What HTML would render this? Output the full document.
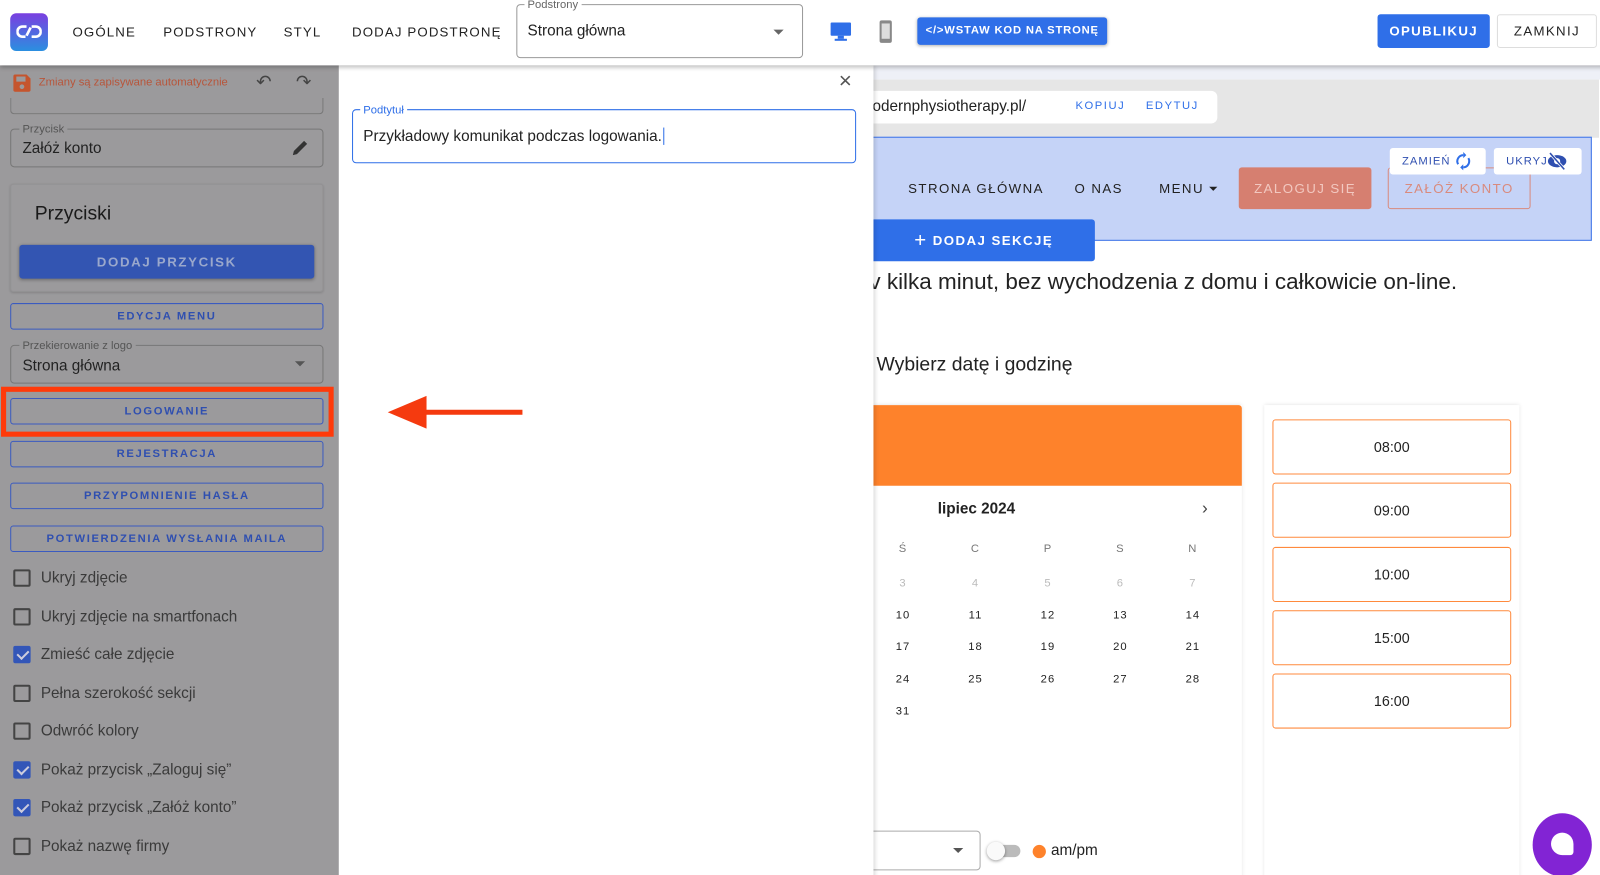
<!DOCTYPE html>
<html><head><meta charset="utf-8"><style>
*{box-sizing:border-box;margin:0;padding:0}
html,body{width:1600px;height:875px;overflow:hidden}
body{position:relative;font-family:"Liberation Sans",Arial,sans-serif;background:#fff;color:#222}
#w{position:absolute;left:0;top:0;width:1568px;height:858px;transform:scale(1.0204);transform-origin:0 0}
.a{position:absolute}
.nav{font-size:13px;letter-spacing:1.1px;color:#222;top:24px}
.lp{background:#9b9a9c;left:0;top:64px;width:332px;height:811px}
.ob{position:absolute;left:10px;width:307px;height:26px;border:1px solid #3b5bc0;border-radius:3px;color:#2f4fb0;font-size:11px;letter-spacing:1.6px;text-align:center;line-height:24px;font-weight:bold}
.cb{position:absolute;left:13px;width:17px;height:17px;border:2px solid #444;border-radius:2px}
.cb.on{background:#3356b8;border-color:#3356b8}
.cb.on:after{content:"";position:absolute;left:4px;top:0px;width:5px;height:9px;border:solid #ccd;border-width:0 2px 2px 0;transform:rotate(45deg)}
.cl{position:absolute;left:40px;font-size:15px;color:#3a3a3a}
.day{position:absolute;width:40px;text-align:center;font-size:11px;letter-spacing:1px;color:#222}
.slot{position:absolute;left:1247px;width:234px;height:54px;border:1.5px solid #ff8a3d;border-radius:3px;text-align:center;line-height:52px;font-size:14px;color:#222}
</style></head><body><div id="w">
<div class="a" style="left:0;top:0;width:1600px;height:64px;background:#fff;box-shadow:0 2px 4px rgba(0,0,0,.25);z-index:5">
 <div class="a" style="left:10px;top:13px;width:37px;height:37px;border-radius:6px;background:linear-gradient(180deg,#7a3fe0,#2b8fe0)"></div>
 <svg class="a" style="left:16px;top:24px" width="25" height="14" viewBox="0 0 25 14"><path d="M10 2H6a5 5 0 0 0 0 10h3M15 2h4a5 5 0 0 1 0 10h-4M14 3l-4 8" stroke="#fff" stroke-width="2.6" fill="none"/></svg>
 <div class="a nav" style="left:71px">OGÓLNE</div>
 <div class="a nav" style="left:160px">PODSTRONY</div>
 <div class="a nav" style="left:278px">STYL</div>
 <div class="a nav" style="left:345px">DODAJ PODSTRONĘ</div>
 <div class="a" style="left:506px;top:4px;width:281px;height:53px;border:1px solid #999;border-radius:4px"></div>
 <div class="a" style="left:514px;top:-1px;background:#fff;padding:0 3px;font-size:11px;color:#666">Podstrony</div>
 <div class="a" style="left:517px;top:22px;font-size:15px;color:#222">Strona główna</div>
 <div class="a" style="left:758px;top:29px;border:5px solid transparent;border-top-color:#666"></div>
 <svg class="a" style="left:813px;top:20px" width="22" height="22" viewBox="0 0 22 22"><rect x="1" y="2" width="20" height="13" rx="1" fill="#2f6fe8"/><rect x="8" y="15" width="6" height="3" fill="#2f6fe8"/><rect x="5" y="18" width="12" height="2" fill="#2f6fe8"/></svg>
 <svg class="a" style="left:860px;top:19px" width="16" height="24" viewBox="0 0 16 24"><rect x="2" y="1" width="12" height="22" rx="2" fill="#888"/><rect x="4" y="4" width="8" height="15" fill="#ddd"/></svg>
 <div class="a" style="left:899px;top:17px;width:186px;height:27px;background:#2f6fe8;border-radius:3px;color:#fff;font-size:11px;font-weight:bold;letter-spacing:.8px;text-align:center;line-height:27px;box-shadow:0 1px 3px rgba(0,0,0,.3)">&lt;/&gt;WSTAW KOD NA STRONĘ</div>
 <div class="a" style="left:1350px;top:14px;width:110px;height:33px;background:#2f6fe8;border-radius:3px;color:#fff;font-size:13px;font-weight:bold;letter-spacing:1.3px;text-align:center;line-height:33px">OPUBLIKUJ</div>
 <div class="a" style="left:1467px;top:14px;width:98px;height:33px;background:#fff;border:1px solid #ddd;border-radius:3px;color:#222;font-size:13px;letter-spacing:1.3px;text-align:center;line-height:31px">ZAMKNIJ</div>
</div>

<div class="a" style="left:855px;top:64px;width:745px;height:14px;background:#eef0f7"></div>
<div class="a" style="left:855px;top:78px;width:712px;height:57px;background:#e6e6e6"></div>
<div class="a" style="left:845px;top:89px;width:348px;height:32px;background:#fff;border-radius:6px"></div>
<div class="a" style="left:855px;top:96px;font-size:15px;color:#222">odernphysiotherapy.pl/</div>
<div class="a" style="left:1054px;top:98px;font-size:11px;letter-spacing:1.5px;color:#2f6fe8">KOPIUJ</div>
<div class="a" style="left:1123px;top:98px;font-size:11px;letter-spacing:1.5px;color:#2f6fe8">EDYTUJ</div>
<div class="a" style="left:848px;top:134px;width:712px;height:102px;background:#c5d3f7;border:1.5px solid #3d74e8"></div>
<div class="a" style="left:890px;top:177px;font-size:13px;letter-spacing:1.4px;color:#222">STRONA GŁÓWNA</div>
<div class="a" style="left:1053px;top:177px;font-size:13px;letter-spacing:1.4px;color:#222">O NAS</div>
<div class="a" style="left:1136px;top:177px;font-size:13px;letter-spacing:1.4px;color:#222">MENU</div>
<div class="a" style="left:1185px;top:183px;border:4px solid transparent;border-top-color:#222"></div>
<div class="a" style="left:1214px;top:164px;width:130px;height:41px;background:#d67f70;border-radius:3px;color:#f2c8c0;font-size:13px;letter-spacing:1.4px;text-align:center;line-height:41px">ZALOGUJ SIĘ</div>
<div class="a" style="left:1360px;top:164px;width:140px;height:41px;border:1.5px solid #d98a7d;border-radius:3px;color:#d98a7d;font-size:13px;letter-spacing:1.4px;text-align:center;line-height:39px">ZAŁÓŻ KONTO</div>
<div class="a" style="left:1362px;top:145px;width:94px;height:26px;background:#fff;border-radius:3px;font-size:11px;letter-spacing:1px;color:#2f4fb0;line-height:26px;padding-left:12px">ZAMIEŃ</div>
<svg class="a" style="left:1425px;top:149px" width="18" height="18" viewBox="0 0 18 18"><path d="M9 3a6 6 0 0 0-5 9M9 15a6 6 0 0 0 5-9" stroke="#2f6fe8" stroke-width="2" fill="none"/><path d="M9 0v6l3-3zM9 18v-6l-3 3z" fill="#2f6fe8"/></svg>
<div class="a" style="left:1464px;top:145px;width:86px;height:26px;background:#fff;border-radius:3px;font-size:11px;letter-spacing:1px;color:#2f4fb0;line-height:26px;padding-left:12px">UKRYJ</div>
<svg class="a" style="left:1516px;top:149px" width="20" height="18" viewBox="0 0 20 18"><ellipse cx="10" cy="9" rx="9" ry="6" fill="#2f4fb0"/><circle cx="10" cy="9" r="3" fill="#fff"/><path d="M3 1L17 17" stroke="#fff" stroke-width="3"/><path d="M3 1L17 17" stroke="#2f4fb0" stroke-width="1.5"/></svg>
<div class="a" style="left:848px;top:215px;width:225px;height:41px;background:#2f6fe8;border-radius:0 3px 3px 0;color:#fff;font-size:13px;font-weight:bold;letter-spacing:1.4px;line-height:41px;padding-left:48px"><span style="font-size:20px;font-weight:normal;vertical-align:-2px">+</span> DODAJ SEKCJĘ</div>
<div class="a" style="left:852px;top:263px;font-size:22px;color:#222">v kilka minut, bez wychodzenia z domu i całkowicie on-line.</div>
<div class="a" style="left:859px;top:347px;font-size:19px;color:#222">Wybierz datę i godzinę</div>
<div class="a" style="left:855px;top:397px;width:362px;height:478px;background:#fff;box-shadow:0 0 4px rgba(0,0,0,.12)"></div>
<div class="a" style="left:855px;top:397px;width:362px;height:79px;background:#fe822b;border-radius:0 3px 0 0"></div>
<div class="a" style="left:919px;top:490px;font-size:15px;font-weight:bold;color:#222">lipiec 2024</div>
<div class="a" style="left:1178px;top:488px;font-size:17px;color:#444">›</div>
<div class="day" style="left:865px;top:532px;color:#777">Ś</div><div class="day" style="left:936px;top:532px;color:#777">C</div><div class="day" style="left:1007px;top:532px;color:#777">P</div><div class="day" style="left:1078px;top:532px;color:#777">S</div><div class="day" style="left:1149px;top:532px;color:#777">N</div>
<div class="day" style="left:865px;top:566px;color:#bbb">3</div><div class="day" style="left:936px;top:566px;color:#bbb">4</div><div class="day" style="left:1007px;top:566px;color:#bbb">5</div><div class="day" style="left:1078px;top:566px;color:#bbb">6</div><div class="day" style="left:1149px;top:566px;color:#bbb">7</div>
<div class="day" style="left:865px;top:597px">10</div><div class="day" style="left:936px;top:597px">11</div><div class="day" style="left:1007px;top:597px">12</div><div class="day" style="left:1078px;top:597px">13</div><div class="day" style="left:1149px;top:597px">14</div>
<div class="day" style="left:865px;top:628px">17</div><div class="day" style="left:936px;top:628px">18</div><div class="day" style="left:1007px;top:628px">19</div><div class="day" style="left:1078px;top:628px">20</div><div class="day" style="left:1149px;top:628px">21</div>
<div class="day" style="left:865px;top:660px">24</div><div class="day" style="left:936px;top:660px">25</div><div class="day" style="left:1007px;top:660px">26</div><div class="day" style="left:1078px;top:660px">27</div><div class="day" style="left:1149px;top:660px">28</div>
<div class="day" style="left:865px;top:691px">31</div>
<div class="a" style="left:845px;top:814px;width:116px;height:39px;border:1px solid #aaa;border-radius:4px;background:#fff"></div>
<div class="a" style="left:934px;top:831px;border:5px solid transparent;border-top-color:#555"></div>
<div class="a" style="left:970px;top:828px;width:30px;height:12px;border-radius:6px;background:#bbb"></div>
<div class="a" style="left:967px;top:825px;width:18px;height:18px;border-radius:50%;background:#fafafa;box-shadow:0 1px 3px rgba(0,0,0,.4)"></div>
<div class="a" style="left:1012px;top:828px;width:13px;height:13px;border-radius:50%;background:#fe822b"></div>
<div class="a" style="left:1030px;top:825px;font-size:15px;color:#222">am/pm</div>
<div class="a" style="left:1239px;top:397px;width:250px;height:478px;background:#fff;box-shadow:0 0 4px rgba(0,0,0,.12)"></div>
<div class="slot" style="top:411px">08:00</div>
<div class="slot" style="top:473px">09:00</div>
<div class="slot" style="top:536px">10:00</div>
<div class="slot" style="top:598px">15:00</div>
<div class="slot" style="top:660px">16:00</div>
<div class="a" style="left:1502px;top:797px;width:58px;height:62px;border-radius:50%;background:#8224d4"></div>
<div class="a" style="left:1520px;top:816px;width:22px;height:22px;border-radius:11px 11px 3px 11px;background:#fff"></div>

<div class="a" style="left:332px;top:64px;width:524px;height:811px;background:#fff;box-shadow:2px 0 4px rgba(0,0,0,.15)"></div>
<div class="a" style="left:822px;top:66px;font-size:22px;color:#555">×</div>
<div class="a" style="left:345px;top:107px;width:494px;height:53px;border:1.5px solid #2f6fe8;border-radius:4px"></div>
<div class="a" style="left:353px;top:102px;background:#fff;padding:0 3px;font-size:11px;color:#2f6fe8">Podtytuł</div>
<div class="a" style="left:356px;top:125px;font-size:15px;color:#222">Przykładowy komunikat podczas logowania.<span style="border-left:1px solid #2f6fe8;margin-left:1px"></span></div>
<svg class="a" style="left:378px;top:386px" width="136" height="36" viewBox="0 0 136 36"><path d="M134 18H30" stroke="#f53a0f" stroke-width="5"/><path d="M2 18L40 2V34Z" fill="#f53a0f"/></svg>

<div class="a lp"></div>
<svg class="a" style="left:13px;top:73px" width="17" height="17" viewBox="0 0 17 17"><path d="M0 2a2 2 0 0 1 2-2h11l4 4v11a2 2 0 0 1-2 2H2a2 2 0 0 1-2-2z" fill="#c5552e"/><rect x="3" y="2" width="9" height="5" fill="#9b9a9c"/><circle cx="8.5" cy="12" r="2.3" fill="#9b9a9c"/></svg>
<div class="a" style="left:38px;top:75px;font-size:11px;color:#b8553a">Zmiany są zapisywane automatycznie</div>
<div class="a" style="left:251px;top:70px;font-size:18px;color:#444">↶</div>
<div class="a" style="left:290px;top:70px;font-size:18px;color:#444">↷</div>
<div class="a" style="left:10px;top:96px;width:307px;height:16px;border:1px solid #777;border-top:none;border-radius:0 0 4px 4px"></div>
<div class="a" style="left:10px;top:126px;width:307px;height:38px;border:1px solid #777;border-radius:4px"></div>
<div class="a" style="left:19px;top:121px;background:#9b9a9c;padding:0 3px;font-size:11px;color:#555">Przycisk</div>
<div class="a" style="left:22px;top:137px;font-size:15px;color:#222">Załóż konto</div>
<svg class="a" style="left:285px;top:136px" width="18" height="18" viewBox="0 0 18 18"><path d="M2 16l1-4L13 2l3 3L6 15z" fill="#333"/></svg>
<div class="a" style="left:10px;top:180px;width:307px;height:106px;border:1px solid #929193;border-radius:3px;box-shadow:0 1px 2px rgba(0,0,0,.15)"></div>
<div class="a" style="left:34px;top:199px;font-size:19px;color:#1a1a1a">Przyciski</div>
<div class="a" style="left:19px;top:240px;width:289px;height:33px;background:#3355b2;border-radius:3px;color:#9aa8cc;font-size:13px;font-weight:bold;letter-spacing:1.6px;text-align:center;line-height:33px;box-shadow:0 1px 3px rgba(0,0,0,.3)">DODAJ PRZYCISK</div>
<div class="ob" style="top:297px">EDYCJA MENU</div>
<div class="a" style="left:10px;top:338px;width:307px;height:38px;border:1px solid #777;border-radius:4px"></div>
<div class="a" style="left:19px;top:333px;background:#9b9a9c;padding:0 3px;font-size:11px;color:#555">Przekierowanie z logo</div>
<div class="a" style="left:22px;top:350px;font-size:15px;color:#222">Strona główna</div>
<div class="a" style="left:289px;top:354px;border:5px solid transparent;border-top-color:#555"></div>
<div class="a" style="left:1px;top:379px;width:326px;height:49px;border:5px solid #ff3a0a"></div>
<div class="ob" style="top:390px">LOGOWANIE</div>
<div class="ob" style="top:432px">REJESTRACJA</div>
<div class="ob" style="top:473px">PRZYPOMNIENIE HASŁA</div>
<div class="ob" style="top:515px">POTWIERDZENIA WYSŁANIA MAILA</div>
<div class="cb" style="top:558px"></div><div class="cl" style="top:558px">Ukryj zdjęcie</div>
<div class="cb" style="top:596px"></div><div class="cl" style="top:596px">Ukryj zdjęcie na smartfonach</div>
<div class="cb on" style="top:633px"></div><div class="cl" style="top:633px">Zmieść całe zdjęcie</div>
<div class="cb" style="top:671px"></div><div class="cl" style="top:671px">Pełna szerokość sekcji</div>
<div class="cb" style="top:708px"></div><div class="cl" style="top:708px">Odwróć kolory</div>
<div class="cb on" style="top:746px"></div><div class="cl" style="top:746px">Pokaż przycisk „Zaloguj się”</div>
<div class="cb on" style="top:783px"></div><div class="cl" style="top:783px">Pokaż przycisk „Załóż konto”</div>
<div class="cb" style="top:821px"></div><div class="cl" style="top:821px">Pokaż nazwę firmy</div>
</div></body></html>
